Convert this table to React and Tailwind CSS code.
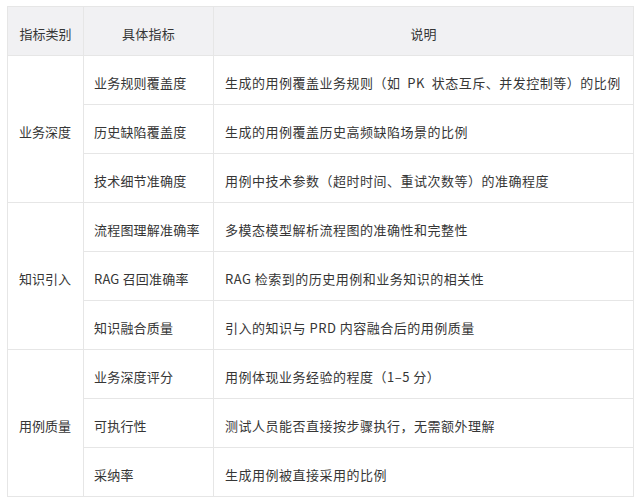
const rows = [
  {
    group: '业务深度',
    items: [
      ['业务规则覆盖度', '生成的用例覆盖业务规则（如\u00a0\u00a0PK\u00a0\u00a0状态互斥、并发控制等）的比例'],
      ['历史缺陷覆盖度', '生成的用例覆盖历史高频缺陷场景的比例'],
      ['技术细节准确度', '用例中技术参数（超时时间、重试次数等）的准确程度'],
    ],
  },
  {
    group: '知识引入',
    items: [
      ['流程图理解准确率', '多模态模型解析流程图的准确性和完整性'],
      ['RAG 召回准确率', 'RAG 检索到的历史用例和业务知识的相关性'],
      ['知识融合质量', '引入的知识与 PRD 内容融合后的用例质量'],
    ],
  },
  {
    group: '用例质量',
    items: [
      ['业务深度评分', '用例体现业务经验的程度（1–5 分）'],
      ['可执行性', '测试人员能否直接按步骤执行，无需额外理解'],
      ['采纳率', '生成用例被直接采用的比例'],
    ],
  },
]

export default function App() {
  return (
    <div
      className="w-[640px] h-[504px] bg-white pt-[6px] pl-[7px] text-[13px] text-[#363636]"
      style={{ fontFamily: '"Noto Sans CJK SC", "Noto Sans", sans-serif' }}
    >
      <table className="w-[627px] border-collapse table-fixed border border-[#e6e6e6]">
        <colgroup>
          <col className="w-[76px]" />
          <col className="w-[130px]" />
          <col />
        </colgroup>
        <thead>
          <tr className="h-[49px] bg-[#f1f1f3]">
            <th className="border border-[#e6e6e6] pt-[6px] font-normal text-center">指标类别</th>
            <th className="border border-[#e6e6e6] pt-[6px] font-normal text-center tracking-[0.2px]">具体指标</th>
            <th className="border border-[#e6e6e6] pt-[6px] font-normal text-center">说明</th>
          </tr>
        </thead>
        <tbody>
          {rows.map((g) =>
            g.items.map((it, i) => (
              <tr key={it[0]} className="h-[49px]">
                {i === 0 && (
                  <td rowSpan={3} className="border border-[#e6e6e6] pl-[11px] pt-[6px]">
                    {g.group}
                  </td>
                )}
                <td className="border border-[#e6e6e6] pl-[10px] pt-[6px] tracking-[0.2px]">{it[0]}</td>
                <td className="border border-[#e6e6e6] pl-[11px] pt-[6px] whitespace-nowrap tracking-[0.5px]">
                  {it[1]}
                </td>
              </tr>
            ))
          )}
        </tbody>
      </table>
    </div>
  )
}
